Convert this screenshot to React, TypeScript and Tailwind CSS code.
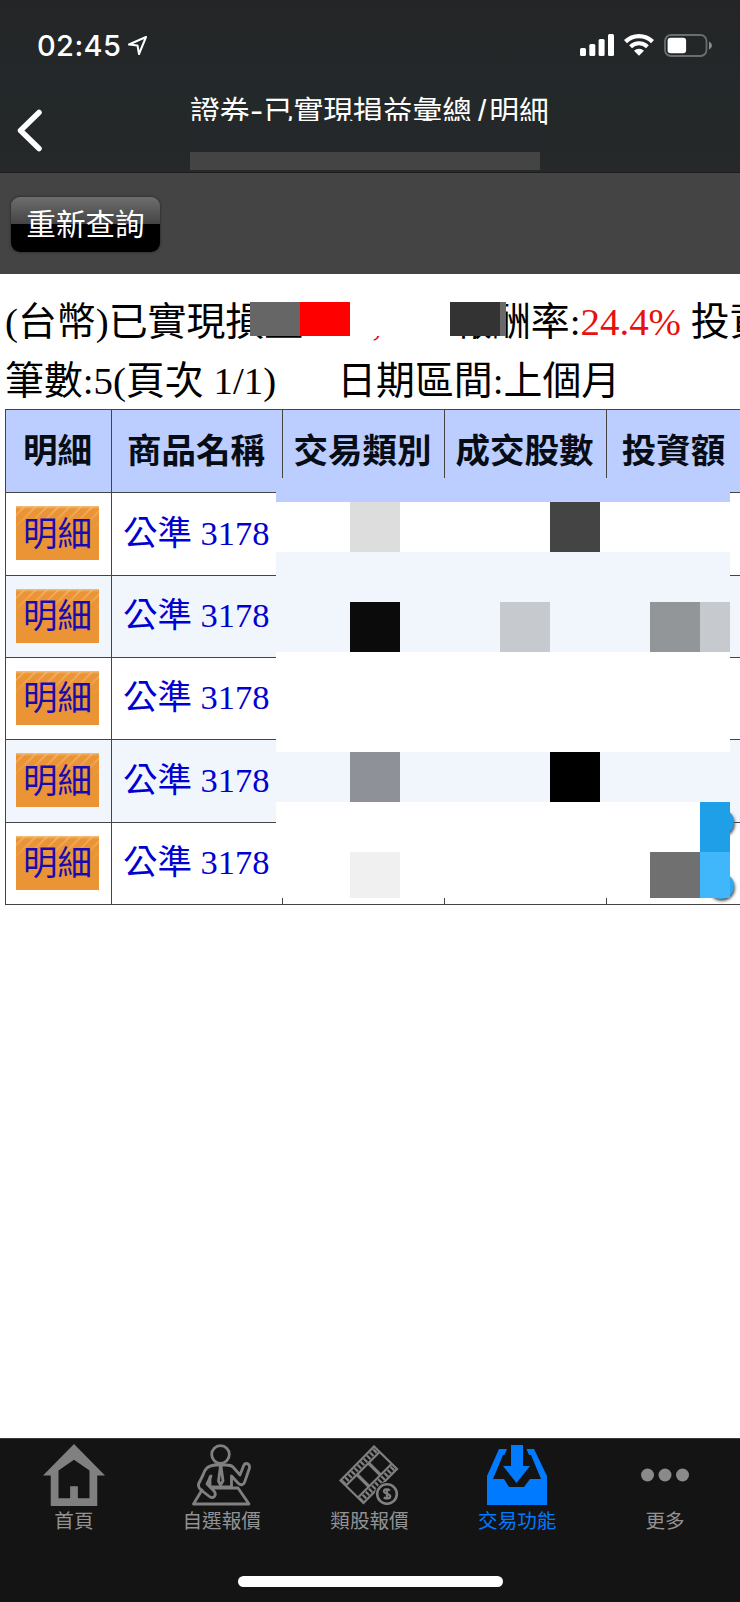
import type { ReactNode } from 'react';

const headers = ['明細', '商品名稱', '交易類別', '成交股數', '投資額'];

const rows = [
  { id: 1, name: '公準 3178', bg: 'bg-white' },
  { id: 2, name: '公準 3178', bg: 'bg-[#f1f6fd]' },
  { id: 3, name: '公準 3178', bg: 'bg-white' },
  { id: 4, name: '公準 3178', bg: 'bg-[#f1f6fd]' },
  { id: 5, name: '公準 3178', bg: 'bg-white' },
];

const B = 'bg-[#bbceff]';
const W = 'bg-white';
const L = 'bg-[#f1f6fd]';

// privacy blocks over the numeric columns, one entry per square
const mosaic = [
  [B, B, B, B, B, B, B, B, B],
  [W, 'bg-[#dddddd]', W, W, W, 'bg-[#444444]', W, W, W],
  [L, L, L, L, L, L, L, L, L],
  [L, 'bg-[#0b0b0b]', L, L, 'bg-[#c6c9cd]', L, L, 'bg-[#939699]', 'bg-[#c6c9cd]'],
  [W, W, W, W, W, W, W, W, W],
  [W, W, W, W, W, W, W, W, W],
  [L, 'bg-[#8e9197]', L, L, L, 'bg-black', L, L, L],
  [W, W, W, W, W, W, W, W, 'bg-[#1e9fe7]'],
  [W, 'bg-[#f0f0f0]', W, W, W, W, W, 'bg-[#707070]', 'bg-[#40b7fb]'],
];

const tableCols = 'grid grid-cols-[106px_171px_162px_162px_1fr]';

function StatusBar() {
  return (
    <div className="flex h-[90px] items-center justify-between pl-[37px] pr-[28px]">
      <div className="flex items-center gap-[6px]">
        <span className="text-[29px] font-medium leading-none tracking-[0.4px]">02:45</span>
        <svg width="21" height="21" viewBox="0 0 21 21" fill="none" stroke="#fff" strokeWidth="2" strokeLinejoin="round">
          <path d="M19 2 2 9.5 10.5 10.5 12 19Z" />
        </svg>
      </div>
      <div className="flex items-center gap-[10px]">
        <svg width="34" height="22" viewBox="0 0 34 22" fill="#fff">
          <rect x="0" y="14" width="6" height="8" rx="1.5" />
          <rect x="9.3" y="10" width="6" height="12" rx="1.5" />
          <rect x="18.6" y="5" width="6" height="17" rx="1.5" />
          <rect x="28" y="0" width="6" height="22" rx="1.5" />
        </svg>
        <svg width="30" height="22" viewBox="0 0 30 22" fill="none" stroke="#fff">
          <path d="M1.5 7.6A19.5 19.5 0 0 1 28.5 7.6" strokeWidth="4.3" />
          <path d="M6.6 12.8A12 12 0 0 1 23.4 12.8" strokeWidth="4" />
          <path d="M10 16.7A7.2 7.2 0 0 1 20 16.7L15 21.8Z" fill="#fff" stroke="none" />
        </svg>
        <svg width="48" height="23" viewBox="0 0 48 23" fill="none">
          <rect x="1" y="1" width="41.5" height="21" rx="6" stroke="#6b6e6f" strokeWidth="1.8" />
          <rect x="3.6" y="3.7" width="18.5" height="15.6" rx="3" fill="#fff" />
          <path d="M45 7.5C48.8 9 48.8 14 45 15.5Z" fill="#8b8d8e" />
        </svg>
      </div>
    </div>
  );
}

function Header() {
  return (
    <header className="relative h-[173px] border-b border-[#1b1c1d] bg-linear-to-b from-[#242526] via-[#23282a] to-[#262829] text-white">
      <StatusBar />
      <div className="flex pl-[17px]">
        <svg className="mt-[19px]" width="26" height="43" viewBox="0 0 26 43" fill="none" stroke="#fff" strokeWidth="5.5" strokeLinecap="round" strokeLinejoin="round">
          <path d="M22 3.5 3.5 21.5 22 39.5" />
        </svg>
        <h1 className="ml-[147px] mt-[1px] flex h-10 whitespace-nowrap text-[29.8px] leading-[40px]">
          <span>證券</span>
          <span className="w-[14px] text-center">-</span>
          <span>已實現損益彙總</span>
          <span className="w-[17px] pl-[4px]">/</span>
          <span>明細</span>
        </h1>
      </div>
      <div className="absolute left-[190px] top-[121px] flex h-[49px] w-[350px] flex-col">
        <div className="h-[31px] bg-[#24282a]" />
        <div className="h-[18px] bg-[#444444]" />
      </div>
    </header>
  );
}

function Summary() {
  return (
    <div className="relative h-[135px] overflow-hidden whitespace-pre pl-[5px] pt-[18px] font-['Liberation_Serif','Noto_Sans_CJK_TC',serif] text-[38.9px] leading-[59px] text-black">
      <p>
        (台幣)已實現損益:<span className="text-[#e60012]">000,000</span>
        <span className="ml-[3px]"> 報酬率:</span>
        <span className="text-[#e8100c]">24.4%</span> 投資額
      </p>
      <p>
        筆數:5(頁次 1/1)<span className="ml-[61px]">日期區間:上個月</span>
      </p>
      <div className="absolute left-[250px] top-[28px] grid h-[34px] grid-cols-[50px_50px_100px_50px_6px]">
        <span className="bg-[#666666]" />
        <span className="bg-[#ff0000]" />
        <span className="bg-white" />
        <span className="bg-[#333333]" />
        <span className="bg-[#696969]" />
      </div>
    </div>
  );
}

function ProfitTable() {
  return (
    <div className="relative ml-[5px] border-l border-t border-[#444444] font-['Liberation_Serif','Noto_Sans_CJK_TC',serif] text-[34.5px] leading-none">
      <div className={`${tableCols} h-[83.4px] bg-[#bbceff] font-bold text-[#080c14]`}>
        {headers.map((header, i) => (
          <div
            key={header}
            className={`flex items-center justify-center border-b border-[#444444] ${i < 4 ? 'border-r pr-[2px]' : ''}`}
          >
            {header}
          </div>
        ))}
      </div>
      {rows.map((row) => (
        <div key={row.id} className={`${tableCols} h-[82.3px] text-[#0000d0] ${row.bg}`}>
          <div className="border-b border-r border-[#444444] pl-[10px] pt-[13px]">
            <div className="flex h-[54px] w-[83px] items-center justify-center bg-[linear-gradient(to_bottom,#f3bf7a_0,transparent_3px),linear-gradient(to_bottom,transparent,#ea9435_45%),repeating-linear-gradient(135deg,#ea9435_0,#ea9435_5px,#f4b877_6.5px,#ea9435_8px)] pt-[1px] text-[#1a0bb0]">
              明細
            </div>
          </div>
          <div className="flex items-center border-b border-r border-[#444444] pb-[2px] pl-[11px]">
            {row.name}
          </div>
          <div className="border-b border-r border-[#444444]" />
          <div className="border-b border-r border-[#444444]" />
          <div className="border-b border-[#444444]" />
        </div>
      ))}

      <span className="absolute left-[702px] top-[399px] size-[26px] rounded-full bg-[#1e9fe7] shadow-[1px_2px_3px_#555]" />
      <span className="absolute left-[702px] top-[463px] size-[26px] rounded-full bg-[#2da9ef] shadow-[1px_2px_3px_#555]" />
      <div className="absolute left-[270px] top-[68px] grid grid-cols-[74px_repeat(7,50px)_30px] grid-rows-[24px_repeat(7,50px)_46px]">
        {mosaic.flat().map((color, i) => (
          <span key={i} className={color} />
        ))}
      </div>
    </div>
  );
}

function HomeIcon() {
  return (
    <svg width="62" height="63" viewBox="0 0 64 64" preserveAspectRatio="none" fill="#808080">
      <path fillRule="evenodd" d="M32 0 64 32H56V63H8V32H0ZM32 16 16 27V55H28V43H36V55H48V27Z" />
    </svg>
  );
}

function TraderIcon() {
  return (
    <svg width="60" height="62" viewBox="0 0 60 62" fill="none" stroke="#808080" strokeWidth="2.8" strokeLinejoin="round" strokeLinecap="round">
      <circle cx="28.5" cy="10.5" r="8.8" />
      <path d="M23 21C15 22 13 25 11 31L6.5 40C6 43 7 44 9 46L18 53C22 55 25 51 22 47L15 40 19 32" />
      <path d="M18 33V43H39.5V32L46 39C49 42 52 41 53 37L57.5 24C58 19 53 18 51.5 22L48 31 41 23C39 21 36 21 34 21H23" />
      <path d="M28.5 22 26.5 37 28.5 41 31 37 29 22" />
      <path d="M10 46 1.5 60H57L46 44H22" />
    </svg>
  );
}

function FilmIcon() {
  return (
    <svg width="60" height="60" viewBox="0 0 60 60" fill="none" stroke="#808080">
      <g strokeWidth="2.2">
        <path d="M1.5 35.5 35 1.5 58 24 24.5 58Z" />
        <path d="M7 40.5 40.5 7M19 52.5 52.5 19" />
        <path d="M18 29.5 30 41.5M29.5 18 41.5 30" strokeWidth="3.2" />
        <path d="M4 38 38 4M21.5 55.5 55.5 21.5" strokeWidth="5" strokeDasharray="2.2 2.2" />
      </g>
      <circle cx="48" cy="49" r="12" fill="#141414" stroke="none" />
      <circle cx="48" cy="49" r="9.8" strokeWidth="2.6" />
      <path d="M51 45.5C49 43.8 44.8 44 45 46.5 45.2 49 51.2 48.5 51.2 51.3 51 54 47 54 44.8 52.5M48 43.5V54.5" strokeWidth="2.2" />
    </svg>
  );
}

function InboxIcon() {
  return (
    <svg width="60" height="60" viewBox="0 0 60 60" fill="#007aff">
      <path d="M0 60V31L12 4H20L17.5 10H16L6 34H17L22 42H37L43 34H54L44 10H42L39.5 4H47L60 31V60Z" />
      <path d="M24 0H36V21H43L29.5 38 16 21H24Z" />
    </svg>
  );
}

function MoreIcon() {
  return (
    <svg width="48" height="60" viewBox="0 0 48 60" fill="#8a8a8a">
      <circle cx="6.5" cy="30" r="6.5" />
      <circle cx="24" cy="30" r="6.5" />
      <circle cx="41.5" cy="30" r="6.5" />
    </svg>
  );
}

const tabs: { label: string; icon: ReactNode; active?: boolean }[] = [
  { label: '首頁', icon: <HomeIcon /> },
  { label: '自選報價', icon: <TraderIcon /> },
  { label: '類股報價', icon: <FilmIcon /> },
  { label: '交易功能', icon: <InboxIcon />, active: true },
  { label: '更多', icon: <MoreIcon /> },
];

function TabBar() {
  return (
    <nav className="flex h-[164px] flex-col items-center border-t border-[#3a3a3a] bg-[#141414]">
      <div className="grid w-full grid-cols-5 pr-[1px]">
        {tabs.map((tab) => (
          <div key={tab.label} className="flex flex-col items-center">
            <div className="flex h-[72px] items-center justify-center">{tab.icon}</div>
            <span
              className={`text-[19.6px] leading-[20px] ${tab.active ? 'text-[#007aff]' : 'text-[#929292]'}`}
            >
              {tab.label}
            </span>
          </div>
        ))}
      </div>
      <div className="mt-[45px] h-[11px] w-[265px] rounded-full bg-white" />
    </nav>
  );
}

export default function App() {
  return (
    <main className="flex h-[1602px] w-[740px] flex-col overflow-hidden bg-white font-['Inter','Noto_Sans_CJK_TC',sans-serif]">
      <Header />
      <div className="flex h-[101px] items-start bg-[#444444] pl-[11px] pt-6">
        <button className="flex h-[55px] w-[149px] items-center justify-center rounded-[9px] bg-[linear-gradient(to_bottom,#6e6e6e_0,#444_49%,#000_50%,#000_100%)] text-[29.6px] text-white shadow-[0_0_2px_1px_#333]">
          重新查詢
        </button>
      </div>
      <section className="flex-1">
        <Summary />
        <ProfitTable />
      </section>
      <TabBar />
    </main>
  );
}
